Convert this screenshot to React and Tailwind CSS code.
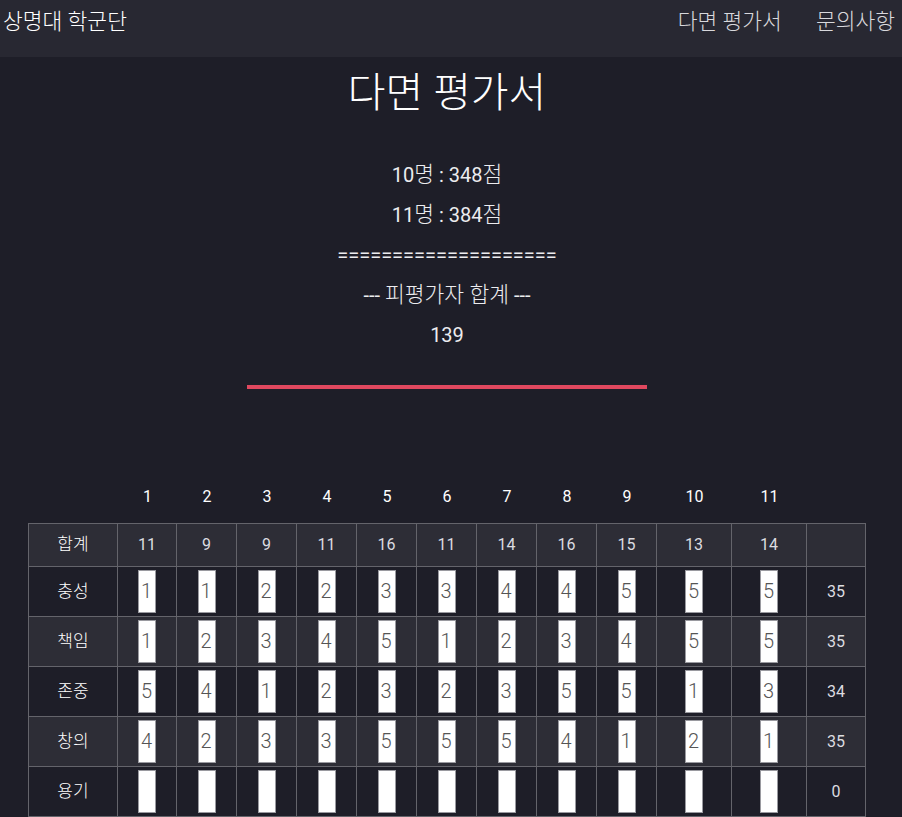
const ff = { fontFamily: "Roboto, 'Noto Sans CJK KR', 'Noto Sans', sans-serif" };

const sums = [11, 9, 9, 11, 16, 11, 14, 16, 15, 13, 14];
const rows = [
  { label: "충성", vals: [1, 1, 2, 2, 3, 3, 4, 4, 5, 5, 5], total: 35 },
  { label: "책임", vals: [1, 2, 3, 4, 5, 1, 2, 3, 4, 5, 5], total: 35 },
  { label: "존중", vals: [5, 4, 1, 2, 3, 2, 3, 5, 5, 1, 3], total: 34 },
  { label: "창의", vals: [4, 2, 3, 3, 5, 5, 5, 4, 1, 2, 1], total: 35 },
  { label: "용기", vals: ["", "", "", "", "", "", "", "", "", "", ""], total: 0 },
];

const gridCols = "grid grid-cols-[89px_59px_60px_60px_60px_60px_60px_60px_60px_60px_75px_75px_59px]";

function Cell({ children, className = "" }) {
  return (
    <div className={"flex items-center justify-center border-r border-b border-[#64646b] " + className}>
      {children}
    </div>
  );
}

function Box({ v }) {
  return (
    <div className="h-[43px] w-[18px] bg-white border border-[#9a9aa0] pl-[2px] text-[20px] font-light leading-[41px] text-[#555] text-left overflow-hidden">
      {v}
    </div>
  );
}

function K({ children }) {
  return <span className="text-[21.5px] font-light">{children}</span>;
}

export default function App() {
  return (
    <div className="min-h-[817px] w-full bg-[#1e1e28] text-white" style={ff}>
      <nav className="h-[57px] bg-[#282832] flex items-start justify-between">
        <div className="pl-[3px] pt-[7px] text-[21.5px] font-light leading-[30px] text-white">상명대 학군단</div>
        <div className="flex pt-[7px] pr-[7px] text-[21.5px] font-light leading-[30px] text-[#d8d8dc]">
          <span className="pl-[16px] pr-[18px]">다면 평가서</span>
          <span className="pl-[16px]">문의사항</span>
        </div>
      </nav>
      <main className="flex flex-col items-center pr-[8px]">
        <h1 className="mt-[12px] text-[41px] leading-[48px] font-light text-white">다면 평가서</h1>
        <div className="mt-[38px] flex flex-col items-center text-[20px] leading-[40px] text-[#ececef]">
          <div className="h-[40px]">10<K>명</K> : 348<K>점</K></div>
          <div className="h-[40px]">11<K>명</K> : 384<K>점</K></div>
          <div className="h-[40px]">====================</div>
          <div className="h-[40px]">--- <K>피평가자 합계</K> ---</div>
          <div className="h-[40px]">139</div>
        </div>
        <div className="mt-[30px] h-[4px] w-[400px] bg-[#e0485f]" />
      </main>
      <div className="ml-[28px] mt-[82px] w-[838px]">
        <div className={gridCols + " h-[52px] pl-px text-[16px] text-white"}>
          <div />
          {sums.map((_, i) => (
            <div key={i} className="flex items-center justify-center">{i + 1}</div>
          ))}
          <div />
        </div>
        <div className="border-l border-t border-[#64646b]">
          <div className={gridCols + " h-[43px] bg-[#2d2d36] text-[16px]"}>
            <Cell className="text-white text-[17px] font-light">합계</Cell>
            {sums.map((s, i) => (
              <Cell key={i} className="text-[#dcdce0]">{s}</Cell>
            ))}
            <Cell />
          </div>
          {rows.map((r, ri) => (
            <div
              key={r.label}
              className={gridCols + " h-[50px] text-[16px] " + (ri % 2 === 1 ? "bg-[#2d2d36]" : "bg-[#1e1e28]")}
            >
              <Cell className="text-white text-[17px] font-light">{r.label}</Cell>
              {r.vals.map((v, i) => (
                <Cell key={i}>
                  <Box v={v} />
                </Cell>
              ))}
              <Cell className="text-[#dcdce0]">{r.total}</Cell>
            </div>
          ))}
        </div>
      </div>
    </div>
  );
}
